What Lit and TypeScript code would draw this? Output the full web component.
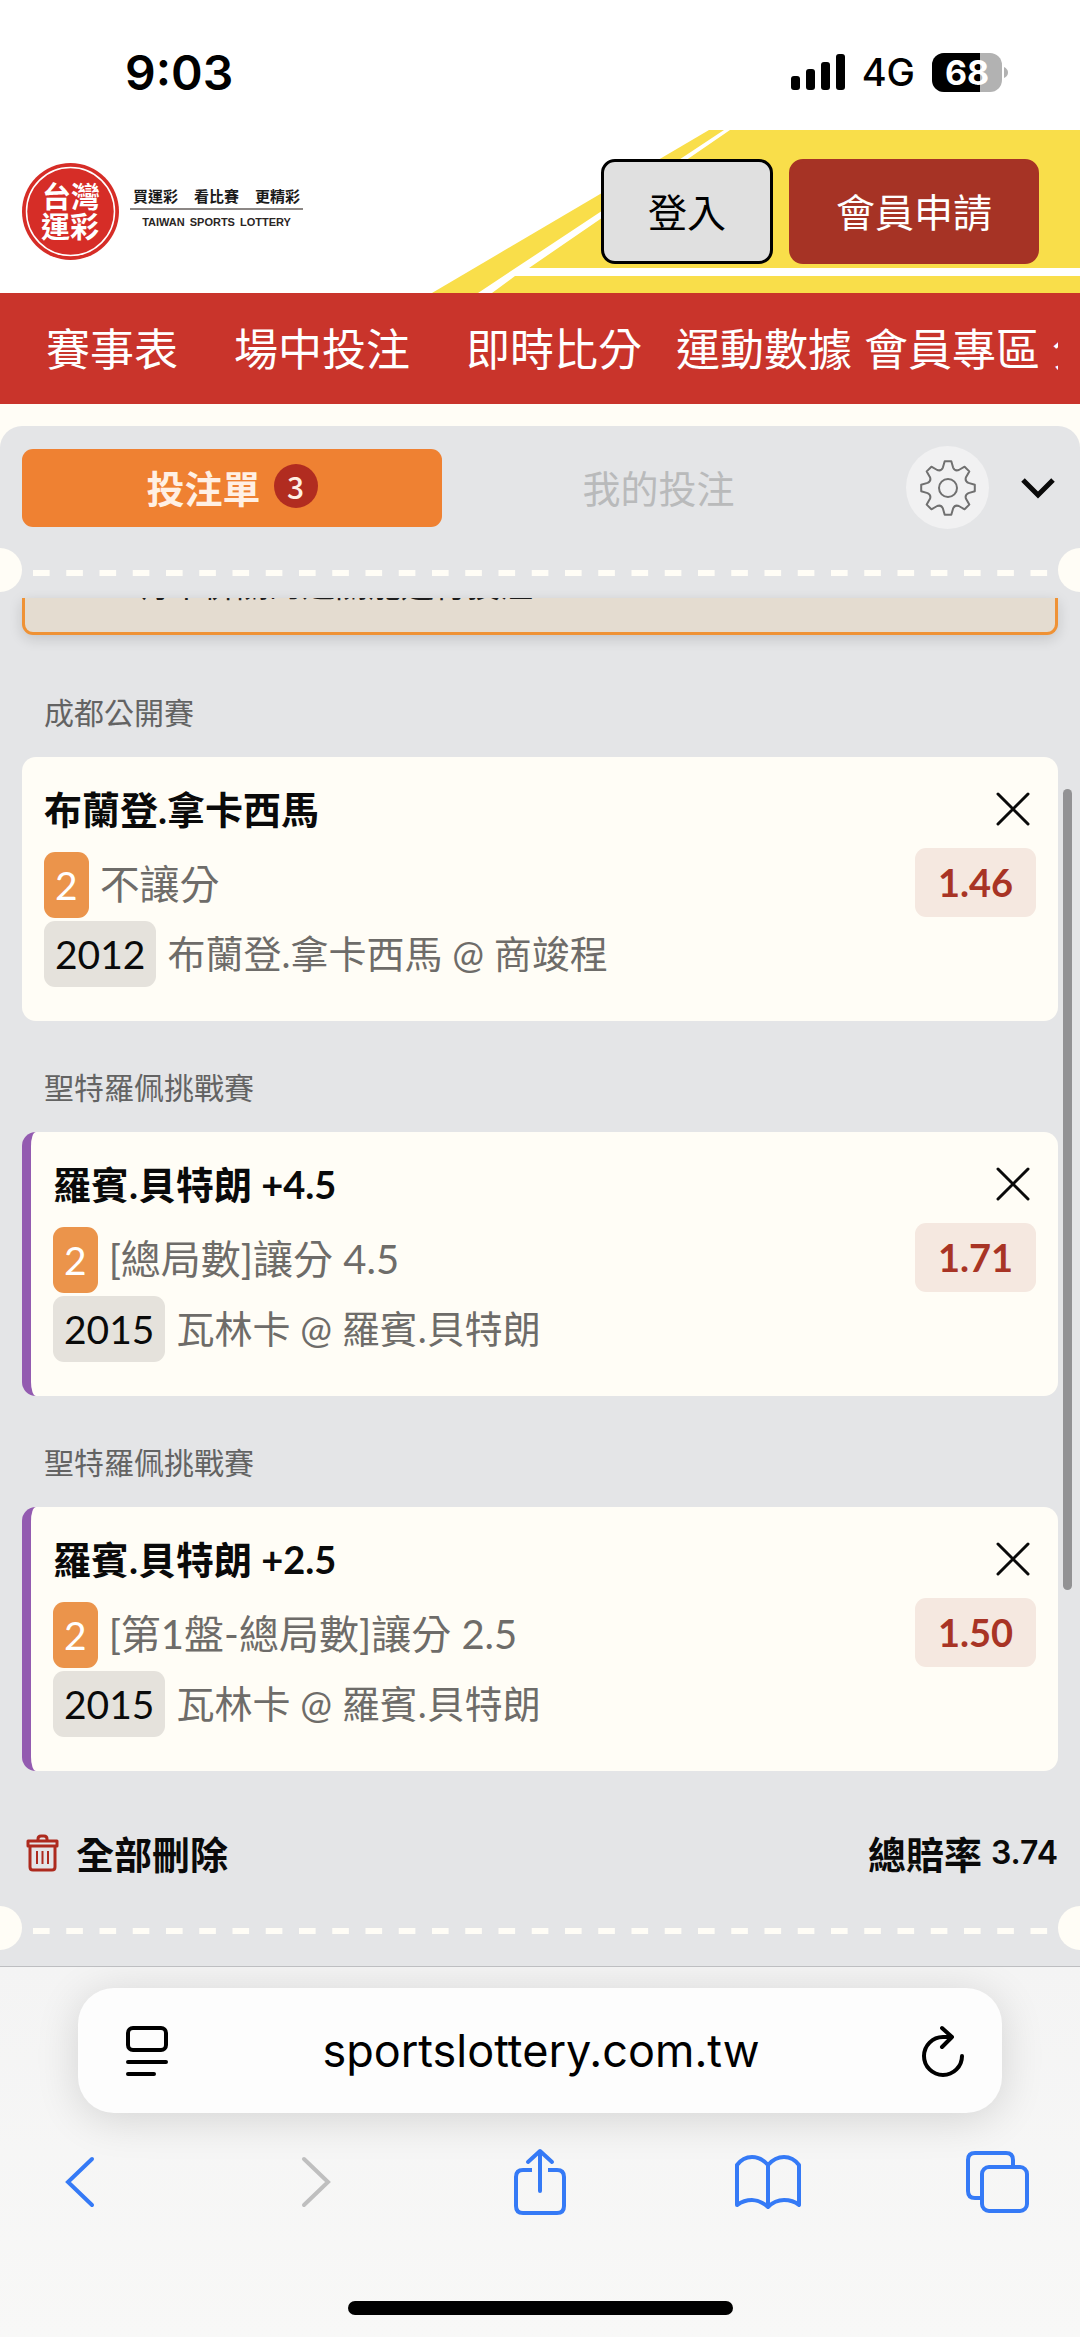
import { LitElement, html, css, svg } from "lit";
import { customElement, property } from "lit/decorators.js";
import { classMap } from "lit/directives/class-map.js";

interface Bet {
  event: string;
  pick: string;
  market: string;
  code: string;
  match: string;
  odds: string;
  live: boolean;
}

const bets: Bet[] = [
  { event: "成都公開賽", pick: "布蘭登.拿卡西馬", market: "不讓分", code: "2012", match: "布蘭登.拿卡西馬 @ 商竣程", odds: "1.46", live: false },
  { event: "聖特羅佩挑戰賽", pick: "羅賓.貝特朗 +4.5", market: "[總局數]讓分 4.5", code: "2015", match: "瓦林卡 @ 羅賓.貝特朗", odds: "1.71", live: true },
  { event: "聖特羅佩挑戰賽", pick: "羅賓.貝特朗 +2.5", market: "[第1盤-總局數]讓分 2.5", code: "2015", match: "瓦林卡 @ 羅賓.貝特朗", odds: "1.50", live: true },
];

/* Outline of an eight-tooth gear centred on 29,29. */
function gearOutline(): string {
  const at = (r: number, deg: number) => {
    const a = (deg * Math.PI) / 180;
    return `${(29 + r * Math.cos(a)).toFixed(1)} ${(29 + r * Math.sin(a)).toFixed(1)}`;
  };
  let d = "";
  for (let k = 0; k < 8; k++) {
    const a = k * 45 - 90;
    d += `${k ? "L" : "M"}${at(27, a - 7)}L${at(27, a + 7)}L${at(21, a + 14)}Q${at(18, a + 22.5)} ${at(21, a + 31)}`;
  }
  return d + "Z";
}

const shared = css`
  :host { display: block; }
  * { box-sizing: border-box; }
  svg { display: block; flex: none; }
  button, input { font: inherit; color: inherit; border: 0; background: none; margin: 0; padding: 0; }
  button { cursor: pointer; }
  a { color: inherit; text-decoration: none; }
`;

@customElement("status-bar")
export class StatusBar extends LitElement {
  static styles = [shared, css`
    .bar { display: flex; justify-content: space-between; align-items: center; height: 130px; padding: 14px 72px 0 125px; font-family: Inter, "Liberation Sans", sans-serif; background: #fff; }
    .time { font-size: 48px; font-weight: 600; }
    .right { display: flex; align-items: center; gap: 17px; }
    .net { font-size: 38px; font-weight: 500; }
    .level { fill: #fff; font-size: 34px; font-weight: 700; text-anchor: middle; }
  `];
  render() {
    return html`<div class="bar">
      <span class="time">9:03</span>
      <div class="right">
        <svg width="54" height="36" viewBox="0 0 54 36"><rect y="22" width="9" height="14" rx="3"/><rect x="15" y="15" width="9" height="21" rx="3"/><rect x="30" y="8" width="9" height="28" rx="3"/><rect x="45" width="9" height="36" rx="3"/></svg>
        <span class="net">4G</span>
        <svg width="76" height="39" viewBox="0 0 76 39">
          <defs><clipPath id="shell"><rect width="70" height="39" rx="12"/></clipPath></defs>
          <g clip-path="url(#shell)"><rect width="70" height="39" fill="#b2b2b2"/><rect width="48" height="39"/></g>
          <path d="M72 14q4 2 4 5.500t-4 5.500z" fill="#b2b2b2"/>
          <text class="level" x="35" y="32">68</text>
        </svg>
      </div>
    </div>`;
  }
}

@customElement("site-header")
export class SiteHeader extends LitElement {
  static styles = [shared, css`
    .header { position: relative; display: flex; align-items: center; justify-content: space-between; height: 163px; padding: 0 41px 0 22px; background: #fff; }
    .sweep { position: absolute; top: 0; right: 0; }
    .brand, .actions { position: relative; display: flex; align-items: center; }
    .brand { gap: 11px; }
    .seal-text { fill: #fff; font: bold 29px "Noto Sans CJK TC", sans-serif; }
    .words { display: flex; flex-direction: column; align-items: center; padding-bottom: 6px; }
    .slogan { display: flex; gap: 16px; font: bold 15px/24px "Noto Sans CJK TC", sans-serif; color: #1a1a1a; }
    .english { display: flex; gap: 5px; border-top: 2px solid #8c8785; width: 173px; justify-content: center; font: bold 11px/24px "Liberation Sans", sans-serif; color: #2a2523; }
    .actions { gap: 16px; }
    .actions button { height: 105px; padding-bottom: 4px; border-radius: 14px; font-size: 39px; border: 3px solid #a63325; }
    .actions .login { width: 172px; background: #e0e0e0; border-color: #000; color: #000; }
    .actions .join { width: 250px; background: #a63325; color: #fff; }
    .nav { display: flex; gap: 12px; height: 111px; align-items: center; padding: 0 0 4px 24px; background: #c9342b; color: #fff; font-size: 44px; border-right: 22px solid #c9342b; overflow: hidden; white-space: nowrap; }
    .wide { padding: 0 22px; }
  `];
  render() {
    const links = ["賽事表", "場中投注", "即時比分", "運動數據", "會員專區", "分析"];
    return html`<header>
      <div class="header">
        <svg class="sweep" width="648" height="163" viewBox="432 0 648 163">
          <path d="M432 163 709 0H1080V163Z" fill="#f9de4a"/>
          <path d="M478 163 724 0H730L529 138H1080V146H515L492 163Z" fill="#fff"/>
        </svg>
        <div class="brand">
          <svg width="97" height="97" viewBox="0 0 97 97">
            <circle cx="48.500" cy="48.500" r="48.500" fill="#d62d27"/>
            <circle cx="48.500" cy="48.500" r="44" fill="none" stroke="#fff" stroke-width="1.500"/>
            <text class="seal-text" x="20" y="45">台灣</text>
            <text class="seal-text" x="19" y="75">運彩</text>
          </svg>
          <div class="words">
            <div class="slogan"><span>買運彩</span><span>看比賽</span><span>更精彩</span></div>
            <div class="english"><span>TAIWAN</span><span>SPORTS</span><span>LOTTERY</span></div>
          </div>
        </div>
        <div class="actions">
          <button class="login">登入</button>
          <button class="join">會員申請</button>
        </div>
      </div>
      <nav class="nav">
        ${links.map((t, i) => html`<a href="#" class=${classMap({ wide: i < 3 })}>${t}</a>`)}
      </nav>
    </header>`;
  }
}

@customElement("ticket-edge")
export class TicketEdge extends LitElement {
  static styles = [shared, css`
    .edge { display: flex; align-items: flex-end; height: 44px; }
    .notch { width: 22px; height: 44px; background: #fffdf6; border-radius: 0 22px 22px 0; }
    .notch.end { border-radius: 22px 0 0 22px; }
    .dashes { flex: 1; height: 22px; margin: 0 -6px 0 11px; background: linear-gradient(90deg, #fffdf6 50%, transparent 50%) 0 0 / 33px 6px; background-repeat: round no-repeat; }
  `];
  render() {
    return html`<div class="edge"><span class="notch"></span><span class="dashes"></span><span class="notch end"></span></div>`;
  }
}

@customElement("bet-card")
export class BetCard extends LitElement {
  @property({ attribute: false }) bet!: Bet;
  static styles = [shared, css`
    .event { margin: 44px 22px 23px; font-size: 30px; line-height: 44px; font-weight: 400; color: #636363; }
    .card { display: grid; grid-template-columns: 1fr auto; height: 264px; padding: 22px 22px 34px; background: #fffdf6; border-radius: 14px; font-size: 38px; color: #6e6c69; align-content: start; }
    .card.live { border-left: 9px solid #935bb0; }
    .pick { margin: 0; font-size: 38px; line-height: 60px; font-weight: 700; color: #0a0a0a; }
    .close { display: flex; justify-content: flex-end; align-items: center; padding-right: 6px; height: 60px; }
    .lines { display: flex; flex-direction: column; gap: 3px; padding-top: 13px; }
    .line { display: flex; align-items: center; gap: 11px; height: 66px; white-space: nowrap; }
    .market, .match { padding-bottom: 6px; }
    .market { font-size: 40px; }
    .tag { height: 66px; line-height: 66px; padding: 0 11px; border-radius: 11px; background: #eb944b; color: #fff; font-size: 39px; }
    .tag.code { background: #e5e2dc; color: #0a0a0a; }
    .odds { width: 121px; height: 69px; margin-top: 9px; line-height: 69px; text-align: center; border-radius: 11px; background: #f5e8e0; color: #a83425; font-weight: 700; }
  `];
  render() {
    const b = this.bet;
    return html`<section>
      <h2 class="event">${b.event}</h2>
      <div class=${classMap({ card: true, live: b.live })}>
        <h3 class="pick">${b.pick}</h3>
        <button class="close" aria-label="刪除">
          <svg width="34" height="34" viewBox="0 0 34 34" fill="none" stroke="#0a0a0a" stroke-width="3" stroke-linecap="round"><path d="M2 2 32 32M32 2 2 32"/></svg>
        </button>
        <div class="lines">
          <div class="line"><span class="tag">2</span><span class="market">${b.market}</span></div>
          <div class="line"><span class="tag code">${b.code}</span><span class="match">${b.match}</span></div>
        </div>
        <span class="odds">${b.odds}</span>
      </div>
    </section>`;
  }
}

@customElement("browser-bar")
export class BrowserBar extends LitElement {
  static styles = [shared, css`
    .bar { height: 371px; padding: 21px 0 0; border-top: 1px solid #bdbec1; background: linear-gradient(#f4f4f4, #f8f8f7); overflow: hidden; font-family: Inter, "Liberation Sans", sans-serif; }
    .address { display: flex; align-items: center; justify-content: space-between; height: 125px; margin: 0 78px; padding: 0 37px 0 47px; border-radius: 36px; background: #fdfdfd; box-shadow: 0 6px 44px rgba(0, 0, 0, 0.14); }
    .url { flex: 1; min-width: 0; padding-right: 8px; text-align: center; font-size: 45px; }
    .tools { display: flex; justify-content: space-between; align-items: center; height: 70px; margin-top: 34px; padding: 0 49px 0 45px; }
    .home { width: 385px; height: 14px; margin: 84px auto 0; border-radius: 7px; background: #000; }
  `];
  render() {
    return html`<footer class="bar">
      <div class="address">
        <button aria-label="網頁選單"><svg width="44" height="52" viewBox="0 0 44 52" fill="none" stroke="#000" stroke-width="4" stroke-linecap="round"><rect x="3" y="3" width="38" height="22" rx="5"/><path d="M3 37H41M3 49H29"/></svg></button>
        <input class="url" aria-label="網址" value="sportslottery.com.tw" readonly>
        <button aria-label="重新載入"><svg width="44" height="52" viewBox="0 0 44 52" fill="none" stroke="#000" stroke-width="4" stroke-linecap="round" stroke-linejoin="round"><path d="M41 31A19 19 0 1 1 22 12H31M21 3 31 12 21 22"/></svg></button>
      </div>
      <div class="tools">
        <button aria-label="上一頁"><svg width="68" height="68" viewBox="0 0 68 68" fill="none" stroke="#357af6" stroke-width="4" stroke-linecap="round"><path d="M47 11 23 34 47 57"/></svg></button>
        <button aria-label="下一頁"><svg width="68" height="68" viewBox="0 0 68 68" fill="none" stroke="#bfbfbf" stroke-width="4" stroke-linecap="round"><path d="M29 11 53 34 29 57"/></svg></button>
        <button aria-label="分享"><svg width="68" height="68" viewBox="-9 0 68 68" fill="none" stroke="#357af6" stroke-width="4" stroke-linecap="round" stroke-linejoin="round"><path d="M19 22H10Q3 22 3 29V58Q3 65 10 65H44Q51 65 51 58V29Q51 22 44 22H35" stroke-linecap="butt"/><path d="M27 43V4M15 14 27 3 39 14"/></svg></button>
        <button aria-label="書籤"><svg width="68" height="68" viewBox="0 -6 68 68" fill="none" stroke="#357af6" stroke-width="4" stroke-linecap="round" stroke-linejoin="round"><path d="M34 11Q27 3 18 3T3 11V51Q10 46 18 46T34 53Q41 46 50 46T65 51V11Q59 3 50 3T34 11V52"/></svg></button>
        <button aria-label="分頁"><svg width="68" height="68" viewBox="-2 -2 68 68" fill="none" stroke="#357af6" stroke-width="4"><rect x="17" y="17" width="45" height="44" rx="7"/><path d="M17 48H10Q3 48 3 41V10Q3 3 10 3H41Q48 3 48 10V16"/></svg></button>
      </div>
      <div class="home"></div>
    </footer>`;
  }
}

@customElement("app-root")
export class AppRoot extends LitElement {
  static styles = [shared, css`
    :host { font-family: Lato, "Noto Sans CJK TC", sans-serif; background: #fffdf6; }
    .panel { margin-top: 22px; border-radius: 22px 22px 0 0; background: #e4e5e7; padding: 20px 0 16px; overflow: hidden; }
    .tabs { display: flex; align-items: center; padding: 0 22px; height: 83px; margin-bottom: 19px; font-size: 38px; }
    .tab { display: flex; align-items: center; justify-content: center; gap: 13px; height: 78px; flex: 419; border-radius: 11px; color: #b9babb; padding-bottom: 3px; }
    .tab.active { background: #ef8132; color: #fff0e4; font-weight: 700; }
    .tab + .tab { flex: 432; }
    .count { width: 44px; height: 44px; line-height: 44px; border-radius: 50%; background: #b12c20; font-size: 30px; font-weight: 500; text-align: center; font-family: "Noto Sans CJK TC", sans-serif; }
    .settings { display: flex; align-items: center; justify-content: center; width: 83px; height: 83px; margin-left: 31px; border-radius: 50%; background: #f1f1f2; }
    .fold { margin: 0 3px 0 32px; padding: 0; }
    .list { position: relative; margin-top: 6px; padding: 0 22px; }
    .thumb { position: absolute; top: 191px; right: 8px; width: 9px; height: 801px; border-radius: 5px; background: #929294; }
    .notice { display: flex; align-items: flex-end; height: 37px; margin: 0 0 55px; padding: 0 112px; border: 3px solid #ef9235; border-top: 0; border-radius: 0 0 11px 11px; background: #e4dcd0; font-size: 33px; line-height: 44px; color: #1c1c1c; box-shadow: 0 4px 14px rgba(0, 0, 0, 0.14); }
    .clip { height: 34px; overflow: hidden; display: flex; align-items: flex-end; padding-bottom: 26px; }
    .total { display: flex; justify-content: space-between; align-items: center; height: 66px; margin: 50px 0 19px; font-weight: 700; font-size: 38px; padding: 0 22px 3px; color: #0a0a0a; }
    .clear { display: flex; align-items: center; gap: 17px; padding-left: 4px; }
    .sum { display: flex; align-items: center; gap: 9px; }
    .value { font: 600 32px Inter, sans-serif; }
  `];
  render() {
    return html`
      <status-bar></status-bar>
      <site-header></site-header>
      <main class="panel">
        <div class="tabs">
          <button class="tab active">投注單<span class="count">3</span></button>
          <button class="tab">我的投注</button>
          <button class="settings" aria-label="設定">
            <svg width="58" height="58" viewBox="0 0 58 58" fill="none" stroke="#707070" stroke-width="2" stroke-linejoin="round">${svg`<path d=${gearOutline()} />`}<circle cx="29" cy="29" r="9"/></svg>
          </button>
          <button class="fold" aria-label="收合">
            <svg width="34" height="22" viewBox="1 0 34 22" fill="none" stroke="#0a0a0a" stroke-width="5"><path d="M3 3 18 18 33 3"/></svg>
          </button>
        </div>
        <ticket-edge></ticket-edge>
        <div class="list">
          <div class="notice"><div class="clip">有串併關的過關能進行投注</div></div>
          ${bets.map((b) => html`<bet-card .bet=${b}></bet-card>`)}
          <div class="thumb"></div>
        </div>
        <div class="total">
          <button class="clear">
            <svg width="33" height="38" viewBox="0 0 33 38" fill="none" stroke="#ad2a1e" stroke-width="3" stroke-linejoin="round"><path d="M2 7H31V12H2ZM12 7V5Q12 2 15 2H18Q21 2 21 5V7M4 12V33Q4 36 7 36H26Q29 36 29 33V12"/><path d="M11 17V30M16.500 17V30M22 17V30" stroke-width="2"/></svg>
            全部刪除
          </button>
          <div class="sum">總賠率<span class="value">3.74</span></div>
        </div>
        <ticket-edge></ticket-edge>
      </main>
      <browser-bar></browser-bar>`;
  }
}
